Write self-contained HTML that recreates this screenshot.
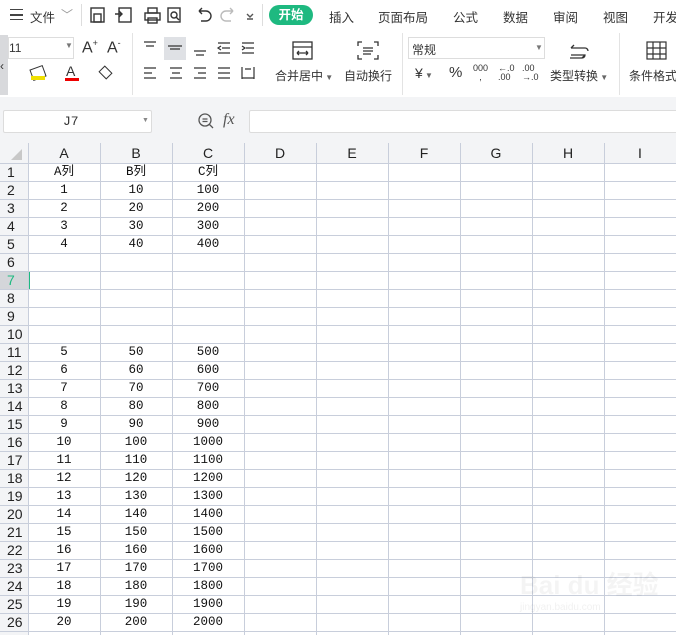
<!DOCTYPE html>
<html><head><meta charset="utf-8"><style>
*{margin:0;padding:0;box-sizing:border-box}
body{width:676px;height:635px;overflow:hidden;background:#fff;font-family:"Liberation Sans","Noto Sans CJK SC",sans-serif;position:relative;color:#333}
.a{position:absolute}
.t{font-size:12px;white-space:nowrap}
.tab{position:absolute;top:7px;font-size:12.5px;color:#333;white-space:nowrap}
.grid{position:absolute;left:0;top:143px;width:676px;height:492px}
.cell{position:absolute;font-family:"Liberation Mono","Noto Sans CJK SC",monospace;font-size:12.5px;text-align:center;color:#111}
.rh{position:absolute;left:0;width:28px;font-size:14px;color:#222;text-align:left;padding-left:7px}
.ch{position:absolute;top:0;height:20px;font-size:14px;text-align:center;line-height:20px;color:#222}
</style></head><body>
<div class="a" style="left:10px;top:9px;width:13px;height:11px;border-top:1.5px solid #444;border-bottom:1.5px solid #444"></div>
<div class="a" style="left:10px;top:14px;width:13px;height:1.5px;background:#444"></div>
<div class="a t" style="left:30px;top:7px;font-size:12.5px">文件</div>
<div class="a t" style="left:61px;top:6px;color:#999">﹀</div>
<div class="a" style="left:81px;top:4px;width:1px;height:22px;background:#ddd"></div>
<svg class="a" style="left:88px;top:5px" width="180" height="20" fill="none" stroke="#333" stroke-width="1.4">
<rect x="3" y="3" width="13" height="14"/><rect x="6" y="9" width="7" height="8"/>
<rect x="31" y="3" width="12" height="14"/><path d="M27 9h7M31 6l3 3-3 3"/>
<rect x="57" y="8" width="15" height="7"/><rect x="60" y="3" width="9" height="5"/><rect x="60" y="13" width="9" height="5"/>
<rect x="80" y="3" width="12" height="14"/><circle cx="86" cy="10" r="3"/><path d="M88 12l3 3"/>
<path d="M111 6h7a5 5 0 010 10h-5M111 6l3-3M111 6l3 3"/>
<path stroke="#bbb" d="M145 6h-7a5 5 0 000 10h5M145 6l-3-3M145 6l-3 3"/>
<path stroke="#555" d="M159 9l3 3 3-3M159 14h6"/>
</svg>
<div class="a" style="left:262px;top:4px;width:1px;height:22px;background:#ddd"></div>
<div class="a" style="left:269px;top:5px;width:44px;height:20px;border-radius:10px;background:#1eb980;color:#fff;font-size:12.5px;text-align:center;line-height:20px;font-weight:bold">开始</div>
<div class="tab" style="left:329px">插入</div>
<div class="tab" style="left:378px">页面布局</div>
<div class="tab" style="left:453px">公式</div>
<div class="tab" style="left:503px">数据</div>
<div class="tab" style="left:553px">审阅</div>
<div class="tab" style="left:603px">视图</div>
<div class="tab" style="left:653px">开发</div>
<div class="a" style="left:0;top:35px;width:8px;height:60px;background:#d8d9dc"></div>
<div class="a t" style="left:0;top:59px;color:#333">‹</div>
<div class="a" style="left:8px;top:37px;width:66px;height:22px;border:1px solid #ddd;background:#fff"></div>
<div class="a t" style="left:9px;top:41px">11</div>
<div class="a t" style="left:65px;top:41px;font-size:8px;color:#777">▼</div>
<div class="a" style="left:82px;top:38px;font-size:16px">A<sup style="font-size:9px">+</sup></div>
<div class="a" style="left:107px;top:38px;font-size:16px">A<sup style="font-size:9px">-</sup></div>
<div class="a" style="left:31px;top:67px;width:14px;height:12px;border:1.2px solid #333;transform:rotate(-20deg)"></div>
<div class="a" style="left:31px;top:76px;width:14px;height:4px;background:#f0e000"></div>
<div class="a t" style="left:66px;top:63px;font-size:14px">A</div>
<div class="a" style="left:65px;top:78px;width:14px;height:3px;background:#e00"></div>
<div class="a" style="left:100px;top:68px;width:11px;height:9px;border:1.2px solid #333;transform:rotate(45deg)"></div>
<div class="a" style="left:132px;top:33px;width:1px;height:62px;background:#e3e3e3"></div>
<svg class="a" style="left:140px;top:37px" width="125" height="50" fill="none" stroke="#333" stroke-width="1.2">
<path d="M4 5h12M6 9h8"/><rect x="24" y="-1" width="22" height="24" fill="#dfe1e5" stroke="none"/><path d="M28 9h14M30 12h10"/><path d="M54 14h12M56 18h8"/>
<path d="M78 6h12M82 11h8M78 16h12M81 9l-3 2 3 2"/><path d="M102 6h12M106 11h8M102 16h12M102 9l3 2-3 2"/>
<path d="M4 31h12M4 36h8M4 41h12"/><path d="M30 31h12M32 36h8M30 41h12"/><path d="M54 31h12M58 36h8M54 41h12"/><path d="M78 31h12M78 36h12M78 41h12"/><path d="M102 30v12M114 30v12M102 41h12M105 32h6"/>
</svg>
<svg class="a" style="left:290px;top:40px" width="26" height="22" fill="none" stroke="#333" stroke-width="1.3"><rect x="3" y="2" width="19" height="17"/><path d="M3 7h19M7 13h11M7 13l2-2M7 13l2 2M18 13l-2-2M18 13l-2 2"/></svg>
<div class="a t" style="left:275px;top:67px">合并居中<span style="font-size:8px;color:#666"> ▼</span></div>
<svg class="a" style="left:355px;top:40px" width="26" height="22" fill="none" stroke="#333" stroke-width="1.3"><path d="M3 6V2h4M19 2h4v4M3 15v4h4M19 19h4v-4M8 8h10M8 11h10M8 14h8"/></svg>
<div class="a t" style="left:344px;top:67px">自动换行</div>
<div class="a" style="left:402px;top:33px;width:1px;height:62px;background:#e3e3e3"></div>
<div class="a" style="left:408px;top:37px;width:137px;height:22px;border:1px solid #ddd"></div>
<div class="a t" style="left:412px;top:41px">常规</div>
<div class="a t" style="left:535px;top:43px;font-size:8px;color:#777">▼</div>
<div class="a" style="left:415px;top:65px;font-size:14px">¥<span style="font-size:8px;color:#666"> ▼</span></div>
<div class="a" style="left:449px;top:64px;font-size:15px">%</div>
<div class="a" style="left:473px;top:64px;font-size:9px;line-height:9px;text-align:center">000<br>,</div>
<div class="a" style="left:498px;top:64px;font-size:9px;line-height:9px">←.0<br>.00</div>
<div class="a" style="left:522px;top:64px;font-size:9px;line-height:9px">.00<br>→.0</div>
<svg class="a" style="left:566px;top:40px" width="26" height="22" fill="none" stroke="#333" stroke-width="1.3"><path d="M5 8h14a3 3 0 013 3M5 8l3-3M5 15h14a3 3 0 01-3 3h-12M19 15l-3 3" /></svg>
<div class="a t" style="left:550px;top:67px">类型转换<span style="font-size:8px;color:#666"> ▼</span></div>
<div class="a" style="left:619px;top:33px;width:1px;height:62px;background:#e3e3e3"></div>
<svg class="a" style="left:646px;top:41px" width="22" height="20" fill="none" stroke="#333" stroke-width="1.2"><rect x="1" y="1" width="19" height="17"/><path d="M1 7h19M1 13h19M7 1v17M14 1v17"/></svg>
<div class="a t" style="left:629px;top:67px">条件格式</div>
<div class="a" style="left:0;top:97px;width:676px;height:46px;background:#f3f4f6"></div>
<div class="a" style="left:3px;top:110px;width:149px;height:23px;background:#fff;border:1px solid #dcdcdc;border-radius:2px"></div>
<div class="a" style="left:63px;top:114px;font-family:'Liberation Mono',monospace;font-size:13px">J7</div>
<div class="a" style="left:142px;top:117px;font-size:7px;color:#888">▼</div>
<svg class="a" style="left:197px;top:112px" width="18" height="18" fill="none" stroke="#555" stroke-width="1.3"><circle cx="8" cy="8" r="6"/><path d="M12 12l4 4M5.5 7h5M5.5 9.5h5"/></svg>
<div class="a" style="left:223px;top:111px;font-family:'Liberation Serif',serif;font-style:italic;font-size:16px;color:#555">fx</div>
<div class="a" style="left:249px;top:110px;width:430px;height:23px;background:#fff;border:1px solid #dcdcdc;border-radius:2px"></div>
<div class="grid">
<div class="a" style="left:0;top:0;width:676px;height:20px;background:#f3f4f6"></div>
<div class="a" style="left:0;top:20px;width:28px;height:472px;background:#f3f4f6"></div>
<div class="a" style="left:0;top:128px;width:28px;height:18px;background:#d4d6da"></div>
<div class="a" style="left:28px;top:128px;width:2px;height:18px;background:#1eb980"></div>
<svg class="a" style="left:8px;top:4px" width="16" height="14"><path d="M14 2v11H3z" fill="#c8c8c8"/></svg>
<svg class="a" style="left:0;top:0" width="676" height="492">
<g stroke="#c8cedb" stroke-width="1">
<line x1="28.5" y1="0" x2="28.5" y2="492"/><line x1="100.5" y1="0" x2="100.5" y2="492"/><line x1="172.5" y1="0" x2="172.5" y2="492"/><line x1="244.5" y1="0" x2="244.5" y2="492"/><line x1="316.5" y1="0" x2="316.5" y2="492"/><line x1="388.5" y1="0" x2="388.5" y2="492"/><line x1="460.5" y1="0" x2="460.5" y2="492"/><line x1="532.5" y1="0" x2="532.5" y2="492"/><line x1="604.5" y1="0" x2="604.5" y2="492"/>
<line x1="0" y1="20.5" x2="676" y2="20.5"/>
<line x1="0" y1="38.5" x2="676" y2="38.5"/><line x1="0" y1="56.5" x2="676" y2="56.5"/><line x1="0" y1="74.5" x2="676" y2="74.5"/><line x1="0" y1="92.5" x2="676" y2="92.5"/><line x1="0" y1="110.5" x2="676" y2="110.5"/><line x1="0" y1="128.5" x2="676" y2="128.5"/><line x1="0" y1="146.5" x2="676" y2="146.5"/><line x1="0" y1="164.5" x2="676" y2="164.5"/><line x1="0" y1="182.5" x2="676" y2="182.5"/><line x1="0" y1="200.5" x2="676" y2="200.5"/><line x1="0" y1="218.5" x2="676" y2="218.5"/><line x1="0" y1="236.5" x2="676" y2="236.5"/><line x1="0" y1="254.5" x2="676" y2="254.5"/><line x1="0" y1="272.5" x2="676" y2="272.5"/><line x1="0" y1="290.5" x2="676" y2="290.5"/><line x1="0" y1="308.5" x2="676" y2="308.5"/><line x1="0" y1="326.5" x2="676" y2="326.5"/><line x1="0" y1="344.5" x2="676" y2="344.5"/><line x1="0" y1="362.5" x2="676" y2="362.5"/><line x1="0" y1="380.5" x2="676" y2="380.5"/><line x1="0" y1="398.5" x2="676" y2="398.5"/><line x1="0" y1="416.5" x2="676" y2="416.5"/><line x1="0" y1="434.5" x2="676" y2="434.5"/><line x1="0" y1="452.5" x2="676" y2="452.5"/><line x1="0" y1="470.5" x2="676" y2="470.5"/><line x1="0" y1="488.5" x2="676" y2="488.5"/>
</g></svg>
<div class="ch" style="left:28px;width:72px">A</div><div class="ch" style="left:100px;width:72px">B</div><div class="ch" style="left:172px;width:72px">C</div><div class="ch" style="left:244px;width:72px">D</div><div class="ch" style="left:316px;width:72px">E</div><div class="ch" style="left:388px;width:72px">F</div><div class="ch" style="left:460px;width:72px">G</div><div class="ch" style="left:532px;width:72px">H</div><div class="ch" style="left:604px;width:72px">I</div>
<div id="rows"></div>
</div>
<div class="a" style="left:520px;top:565px;font-size:26px;font-weight:bold;color:rgba(0,0,0,0.045);white-space:nowrap">Bai du 经验</div>
<div class="a" style="left:520px;top:602px;font-size:10px;color:rgba(0,0,0,0.06)">jingyan.baidu.com</div>
<script>
var d=[["A列","B列","C列"],[1,10,100],[2,20,200],[3,30,300],[4,40,400],null,null,null,null,null];
for(var i=5;i<=20;i++)d.push([i,i*10,i*100]);
var h="";
for(var r=0;r<26;r++){var y=20+r*18;
h+='<div class="rh" style="top:'+y+'px;height:18px;line-height:18px;'+(r==6?'color:#1eb980':'')+'">'+(r+1)+'</div>';
if(d[r])for(var c=0;c<3;c++)h+='<div class="cell" style="left:'+(28+c*72)+'px;top:'+y+'px;width:72px;height:18px;line-height:19px">'+d[r][c]+'</div>';}
document.getElementById("rows").innerHTML=h;
</script>
</body></html>
